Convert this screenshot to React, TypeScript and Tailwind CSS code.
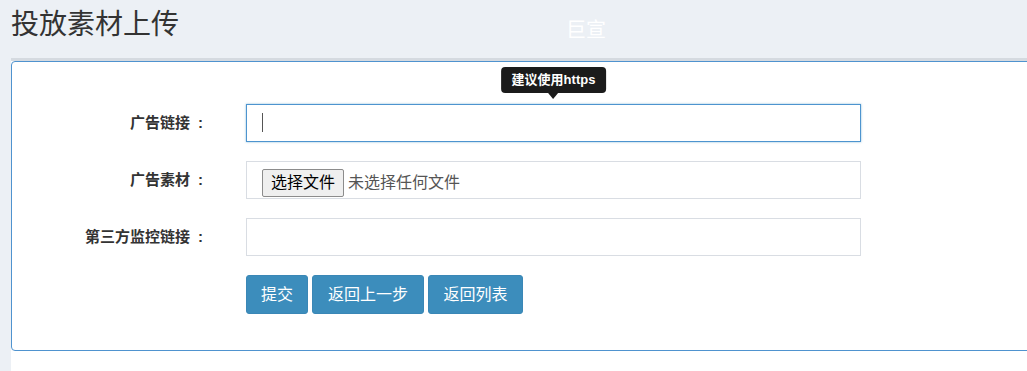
const fontStack = "font-['Liberation_Sans','Noto_Sans_CJK_SC',sans-serif]";

const buttons = [
  { label: "提交", width: "w-[62px]" },
  { label: "返回上一步", width: "w-[112px]" },
  { label: "返回列表", width: "w-[95px]" },
];

function FormRow({ label, children }: { label: string; children: React.ReactNode }) {
  return (
    <div className="flex items-center">
      <label className="w-[191px] text-right text-[15px] font-bold text-[#333]">
        {label}
        <span className="ml-[8px]">:</span>
      </label>
      <div className="ml-[43px] w-[615px]">{children}</div>
    </div>
  );
}

export default function App() {
  return (
    <div className={`flex min-h-screen flex-col overflow-hidden bg-[#ecf0f5] ${fontStack}`}>
      <header className="flex h-[58px] shrink-0 items-start">
        <h1 className="ml-[11px] mt-[6px] text-[28px] leading-[38px] text-[#333]">投放素材上传</h1>
        <span className="ml-[387px] mt-[17px] text-[20px] leading-[26px] text-white">巨宣</span>
      </header>

      <div className="ml-[11px] flex w-[1040px] flex-1 flex-col bg-white border-t-[3px] border-[#d5dae0]">
        <div className="rounded-[4px] border border-[#4f93cf] pb-[36px] pt-[42px]">
          <div className="flex flex-col gap-[19px]">
            <FormRow label="广告链接">
              <div className="relative">
                <div className="absolute bottom-[calc(100%+5px)] left-1/2 -translate-x-1/2">
                  <div className="whitespace-nowrap rounded-[4px] bg-[#1b1b1b] px-[11px] py-[4px] text-[13px] font-bold leading-[18px] text-white">
                    建议使用https
                  </div>
                  <div className="mx-auto h-0 w-0 border-x-[5px] border-t-[6px] border-x-transparent border-t-[#1b1b1b]" />
                </div>
                <input
                  type="text"
                  className="block h-[38px] w-full border border-[#4d94cf] bg-white px-[12px] text-[14px] shadow-[0_0_2px_rgba(60,141,188,0.6)] outline-none"
                />
                <span className="pointer-events-none absolute left-[16px] top-[9px] h-[19px] w-px bg-[#555]" />
              </div>
            </FormRow>

            <FormRow label="广告素材">
              <div className="flex h-[38px] items-start border border-[#d9dde3] pl-[15px] pt-[7px]">
                <button className="h-[28px] rounded-[2px] border border-[#8c8c8c] bg-[#efefef] px-[8px] text-[16px] leading-[26px] text-black">
                  选择文件
                </button>
                <span className="ml-[4px] text-[16px] leading-[28px] text-[#555]">未选择任何文件</span>
              </div>
            </FormRow>

            <FormRow label="第三方监控链接">
              <input type="text" className="block h-[38px] w-full border border-[#d9dde3] bg-white px-[12px] text-[14px] outline-none" />
            </FormRow>

            <div className="ml-[234px] flex gap-[4px]">
              {buttons.map((b) => (
                <button
                  key={b.label}
                  className={`h-[39px] ${b.width} rounded-[3px] border border-[#3a87b6] bg-[#3c8dbc] text-[16px] text-white`}
                >
                  {b.label}
                </button>
              ))}
            </div>
          </div>
        </div>
      </div>
    </div>
  );
}
